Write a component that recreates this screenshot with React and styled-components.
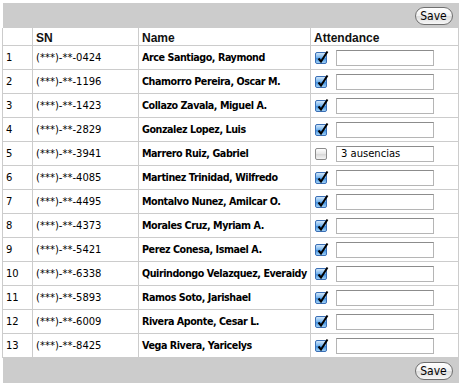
import React from "react";
import styled, { createGlobalStyle } from "styled-components";

const GlobalStyle = createGlobalStyle`
  body {
    margin: 0;
    background: #fff;
    font-family: "DejaVu Sans", Verdana, sans-serif;
  }
`;

const students = [
  { sn: "(***)-**-0424", name: "Arce Santiago, Raymond", here: true, note: "" },
  { sn: "(***)-**-1196", name: "Chamorro Pereira, Oscar M.", here: true, note: "" },
  { sn: "(***)-**-1423", name: "Collazo Zavala, Miguel A.", here: true, note: "" },
  { sn: "(***)-**-2829", name: "Gonzalez Lopez, Luis", here: true, note: "" },
  { sn: "(***)-**-3941", name: "Marrero Ruiz, Gabriel", here: false, note: "3 ausencias" },
  { sn: "(***)-**-4085", name: "Martinez Trinidad, Wilfredo", here: true, note: "" },
  { sn: "(***)-**-4495", name: "Montalvo Nunez, Amilcar O.", here: true, note: "" },
  { sn: "(***)-**-4373", name: "Morales Cruz, Myriam A.", here: true, note: "" },
  { sn: "(***)-**-5421", name: "Perez Conesa, Ismael A.", here: true, note: "" },
  { sn: "(***)-**-6338", name: "Quirindongo Velazquez, Everaidy", here: true, note: "" },
  { sn: "(***)-**-5893", name: "Ramos Soto, Jarishael", here: true, note: "" },
  { sn: "(***)-**-6009", name: "Rivera Aponte, Cesar L.", here: true, note: "" },
  { sn: "(***)-**-8425", name: "Vega Rivera, Yaricelys", here: true, note: "" },
];

const Page = styled.div`
  padding: 3px 2px 0 2px;
  width: 457px;
`;

const Table = styled.table`
  width: 100%;
  border-collapse: collapse;
  table-layout: fixed;
`;

const BarCell = styled.td`
  background: #cccccc;
  height: 25px;
  padding: 0 6px 0 0;
  text-align: right;
  vertical-align: middle;
  border: none;
`;

const Th = styled.th`
  height: 17px;
  padding: 0 0 0 3px;
  text-align: left;
  font-family: "Liberation Sans", Arial, sans-serif;
  font-size: 12px;
  font-weight: bold;
  color: #111;
  border-left: 1px solid #cccccc;
  border-bottom: 1px solid #cccccc;
  vertical-align: bottom;
`;

const Td = styled.td`
  height: 23px;
  padding: 0 0 0 3px;
  font-size: 10px;
  color: #000;
  border: 1px solid #cccccc;
  border-top: none;
  white-space: nowrap;
  overflow: hidden;
  vertical-align: middle;
`;

const NameTd = styled(Td)`
  font-weight: bold;
  font-size: 9.6px;
  letter-spacing: -0.45px;
`;

const AttendTd = styled(Td)`
  padding-left: 4px;
`;

const Attend = styled.div`
  display: flex;
  align-items: center;
  gap: 9px;
`;

const Check = styled.span`
  width: 12px;
  height: 12px;
  border-radius: 2px;
  box-sizing: border-box;
  border: 1px solid ${(p) => (p.$on ? "#3b6fb5" : "#8d8d8d")};
  background: ${(p) =>
    p.$on
      ? "linear-gradient(#cfe6fb, #6fb0ec 50%, #3c8de0 51%, #9ed0f7)"
      : "linear-gradient(#ffffff, #e6e6e6 50%, #d6d6d6 51%, #f4f4f4)"};
  position: relative;
  flex: none;
  margin-top: 1px;
  svg {
    position: absolute;
    left: 0px;
    top: -3px;
  }
`;

const Note = styled.input`
  width: 98px;
  height: 16px;
  box-sizing: border-box;
  border: 1px solid #b5b5b5;
  border-top-color: #8c8c8c;
  padding: 0 4px;
  font-family: "DejaVu Sans", Verdana, sans-serif;
  font-size: 10px;
  color: #000;
  outline: none;
`;

const SaveButton = styled.button`
  height: 18px;
  width: 38px;
  padding: 0;
  border: 1px solid #6f6f6f;
  border-radius: 9px;
  background: linear-gradient(#ffffff, #f0f0f0 50%, #dcdcdc 51%, #f7f7f7);
  font-family: "DejaVu Sans Condensed", "DejaVu Sans", sans-serif;
  font-size: 12px;
  color: #000;
  line-height: 16px;
  vertical-align: middle;
`;

function Checkbox({ on }) {
  return (
    <Check $on={on}>
      {on && (
        <svg width="13" height="14" viewBox="0 0 13 14">
          <path d="M2.5 8.5 L5 11.5 L11.5 1.5" fill="none" stroke="#000" strokeWidth="2" />
        </svg>
      )}
    </Check>
  );
}

function Bar() {
  return (
    <tr>
      <BarCell colSpan={4}>
        <SaveButton>Save</SaveButton>
      </BarCell>
    </tr>
  );
}

export default function App() {
  return (
    <>
      <GlobalStyle />
      <Page>
        <Table>
          <colgroup>
            <col style={{ width: 30 }} />
            <col style={{ width: 106 }} />
            <col style={{ width: 172 }} />
            <col />
          </colgroup>
          <tbody>
            <Bar />
            <tr>
              <Th />
              <Th>SN</Th>
              <Th>Name</Th>
              <Th style={{ borderRight: "1px solid #cccccc" }}>Attendance</Th>
            </tr>
            {students.map((s, i) => (
              <tr key={s.sn}>
                <Td>{i + 1}</Td>
                <Td>{s.sn}</Td>
                <NameTd>{s.name}</NameTd>
                <AttendTd>
                  <Attend>
                    <Checkbox on={s.here} />
                    <Note defaultValue={s.note} />
                  </Attend>
                </AttendTd>
              </tr>
            ))}
            <Bar />
          </tbody>
        </Table>
      </Page>
    </>
  );
}
